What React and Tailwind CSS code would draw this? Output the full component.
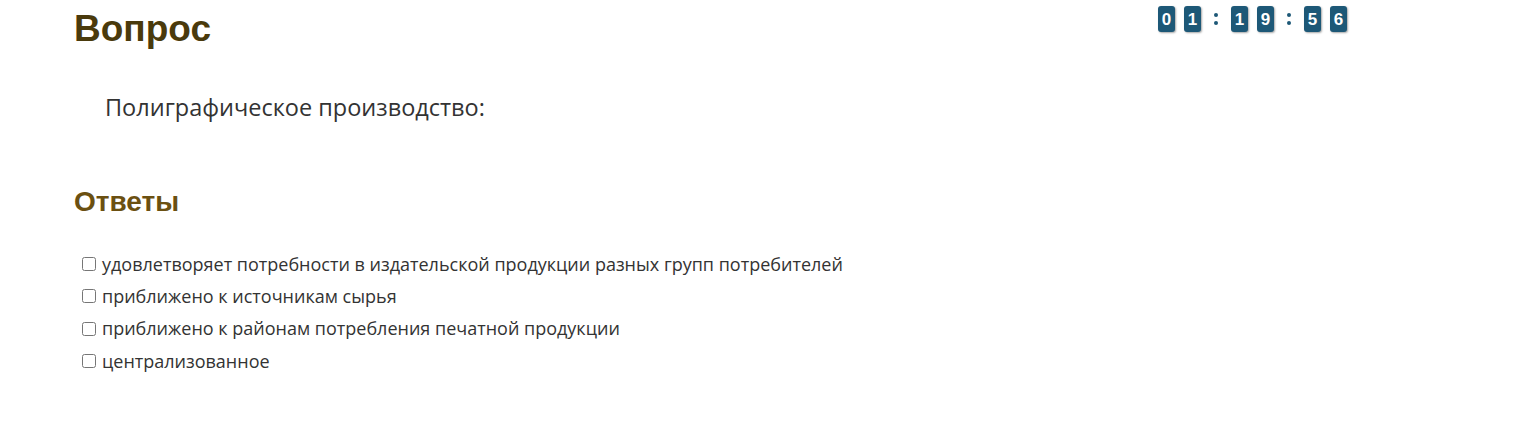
const answers = [
  "удовлетворяет потребности в издательской продукции разных групп потребителей",
  "приближено к источникам сырья",
  "приближено к районам потребления печатной продукции",
  "централизованное",
];

function Digit({ value }) {
  return (
    <span className="flex h-[26px] w-[17px] items-center justify-center rounded-[3px] bg-[#1d5877] text-[17px] font-bold leading-none text-white shadow-[1px_1px_2px_rgba(0,0,0,0.35)]">
      {value}
    </span>
  );
}

function Colon() {
  return (
    <span className="-mx-[9px] flex w-[30px] flex-col items-center justify-center gap-[4px]">
      <span className="h-[4px] w-[4px] rounded-full bg-[#1d5877]" />
      <span className="h-[4px] w-[4px] rounded-full bg-[#1d5877]" />
    </span>
  );
}

function Timer() {
  return (
    <div className="mt-[6px] flex h-[26px] items-stretch gap-[9px] self-start font-['Liberation_Sans',Arial,sans-serif]">
      <Digit value="0" />
      <Digit value="1" />
      <Colon />
      <Digit value="1" />
      <Digit value="9" />
      <Colon />
      <Digit value="5" />
      <Digit value="6" />
    </div>
  );
}

export default function App() {
  return (
    <div className="h-[439px] w-full bg-white font-['Open_Sans',sans-serif] text-[#333]">
      <div className="flex justify-between pl-[74px] pr-[177px]">
        <h1 className="pt-[6px] font-['Liberation_Sans',Arial,sans-serif] text-[37px] font-bold leading-[46px] text-[#4a3a0c]">
          Вопрос
        </h1>
        <Timer />
      </div>

      <p className="mt-[40px] pl-[105px] text-[23.5px] leading-[30px] text-[#333]">Полиграфическое производство:</p>

      <h2 className="mt-[64px] pl-[74px] font-['Liberation_Sans',Arial,sans-serif] text-[28px] font-bold leading-[32px] text-[#6b5011]">
        Ответы
      </h2>

      <ul className="mt-[30px] flex flex-col pl-[82px]">
        {answers.map((text) => (
          <li key={text} className="flex h-[32.3px] items-center gap-[6px] text-[18px] text-[#333]">
            <input type="checkbox" className="h-[14px] w-[14px] rounded-[3px] border border-[#767676]" />
            <span>{text}</span>
          </li>
        ))}
      </ul>
    </div>
  );
}
